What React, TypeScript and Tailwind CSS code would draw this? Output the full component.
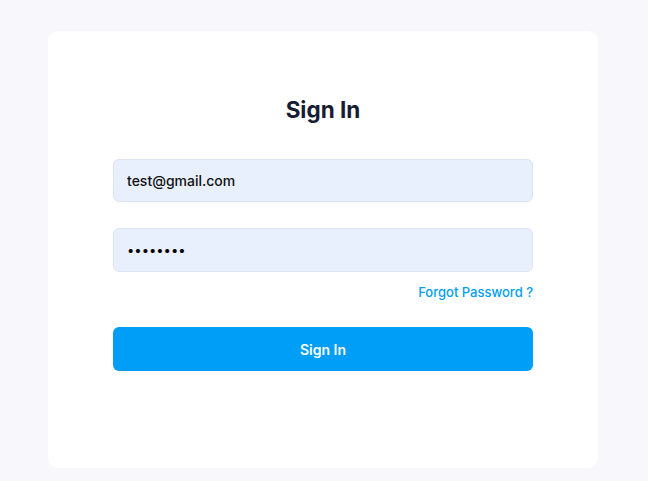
import { useState } from "react";

function App() {
  const [email, setEmail] = useState<string>("test@gmail.com");
  const [password, setPassword] = useState<string>("password");

  return (
    <div
      className="min-h-[481px] bg-[#f8f8fc] pt-[31px] pl-[48px]"
      style={{ fontFamily: "Inter, 'Noto Sans', sans-serif" }}
    >
      <div className="w-[550px] h-[437px] rounded-[10px] bg-white px-[65px] pt-[63px]">
        <h1 className="text-center text-[22.5px] leading-[32px] font-bold text-[#181c32]">
          Sign In
        </h1>
        <form className="mt-[33px]" onSubmit={(e) => e.preventDefault()}>
          <input
            type="email"
            value={email}
            onChange={(e) => setEmail(e.target.value)}
            className="block w-full h-[43px] rounded-[6px] border border-[#dde3f0] bg-[#e8f0fe] px-[13px] text-[14px] font-medium text-[#111] outline-none"
          />
          <input
            type="password"
            value={password}
            onChange={(e) => setPassword(e.target.value)}
            className="mt-[26px] block w-full h-[44px] rounded-[6px] border border-[#dde3f0] bg-[#e8f0fe] px-[13px] text-[13px] text-black outline-none"
          />
          <div className="mt-[11px] flex justify-end">
            <a href="#" className="text-[13px] leading-[19px] font-medium text-[#009ef7]">
              Forgot Password ?
            </a>
          </div>
          <button
            type="submit"
            className="mt-[25px] block w-full h-[44px] rounded-[6px] bg-[#009ef7] text-[14px] font-semibold text-white"
          >
            Sign In
          </button>
        </form>
      </div>
    </div>
  );
}

export default App;
